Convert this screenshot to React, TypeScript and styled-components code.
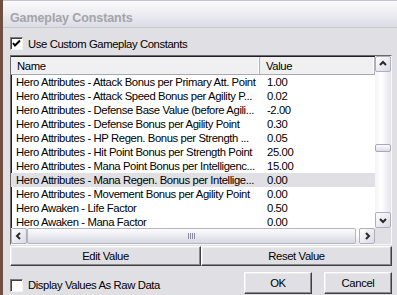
import React from 'react';
import styled, { createGlobalStyle } from 'styled-components';

interface Row {
	name: string;
	value: string;
	selected?: boolean;
}

const rows: Row[] = [
	{ name: 'Hero Attributes - Attack Bonus per Primary Att. Point', value: '1.00' },
	{ name: 'Hero Attributes - Attack Speed Bonus per Agility P...', value: '0.02' },
	{ name: 'Hero Attributes - Defense Base Value (before Agili...', value: '-2.00' },
	{ name: 'Hero Attributes - Defense Bonus per Agility Point', value: '0.30' },
	{ name: 'Hero Attributes - HP Regen. Bonus per Strength ...', value: '0.05' },
	{ name: 'Hero Attributes - Hit Point Bonus per Strength Point', value: '25.00' },
	{ name: 'Hero Attributes - Mana Point Bonus per Intelligenc...', value: '15.00' },
	{ name: 'Hero Attributes - Mana Regen. Bonus per Intellige...', value: '0.00', selected: true },
	{ name: 'Hero Attributes - Movement Bonus per Agility Point', value: '0.00' },
	{ name: 'Hero Awaken - Life Factor', value: '0.50' },
	{ name: 'Hero Awaken - Mana Factor', value: '0.00' },
];

const Chevron = ({ dir }: { dir: 'up' | 'down' | 'left' | 'right' }) => {
	const pts = {
		up: '2,6 5,3 8,6',
		down: '2,4 5,7 8,4',
		left: '6,2 3,5 6,8',
		right: '4,2 7,5 4,8',
	}[dir];
	return (
		<svg width='10' height='10' viewBox='0 0 10 10'>
			<polyline points={pts} fill='none' stroke='#2a2a2a' strokeWidth='2' />
		</svg>
	);
};

const App = () => {
	return (
		<>
			<GlobalStyle />
			<Window>
				<TitleBar>Gameplay Constants</TitleBar>
				<Body>
					<CheckRow>
						<CheckBox>
							<svg width='9' height='9' viewBox='0 0 9 9'>
								<polyline points='1,4 3,6.5 8,1.5' fill='none' stroke='#000' strokeWidth='2' />
							</svg>
						</CheckBox>
						<span>Use Custom Gameplay Constants</span>
					</CheckRow>

					<ListBox>
						<ListContent>
							<HeaderRow>
								<HeaderCell>Name</HeaderCell>
								<HeaderCell>Value</HeaderCell>
							</HeaderRow>
							{rows.map((r) => (
								<DataRow key={r.name} $selected={r.selected}>
									<NameCell>{r.name}</NameCell>
									<ValueCell>{r.value}</ValueCell>
								</DataRow>
							))}
						</ListContent>

						<VScroll>
							<ArrowBtn>
								<Chevron dir='up' />
							</ArrowBtn>
							<VTrack>
								<VThumb style={{ marginTop: 72 }} />
							</VTrack>
							<ArrowBtn>
								<Chevron dir='down' />
							</ArrowBtn>
						</VScroll>

						<HScroll>
							<ArrowBtn>
								<Chevron dir='left' />
							</ArrowBtn>
							<HTrack>
								<HThumb>
									<Grip />
								</HThumb>
							</HTrack>
							<ArrowBtn>
								<Chevron dir='right' />
							</ArrowBtn>
						</HScroll>
						<Corner />
					</ListBox>

					<ActionRow>
						<RaisedButton>Edit Value</RaisedButton>
						<RaisedButton>Reset Value</RaisedButton>
					</ActionRow>

					<FooterRow>
						<CheckRow>
							<CheckBox />
							<span>Display Values As Raw Data</span>
						</CheckRow>
						<DialogButtons>
							<RaisedButton>OK</RaisedButton>
							<RaisedButton>Cancel</RaisedButton>
						</DialogButtons>
					</FooterRow>
				</Body>
			</Window>
		</>
	);
};

const GlobalStyle = createGlobalStyle`
	html, body {
		margin: 0;
		padding: 0;
	}
	body {
		width: 397px;
		height: 295px;
		overflow: hidden;
		background: #e0dfe3;
		font-family: 'Liberation Sans', Arial, sans-serif;
		font-size: 11.3px;
		letter-spacing: -0.4px;
		color: #000;
	}
`;

const Window = styled.div`
	display: flex;
	flex-direction: column;
	width: 397px;
	height: 295px;
	box-sizing: border-box;
	border-left: 3px solid #6e4f40;
	background: #e0dfe3;
`;

const TitleBar = styled.div`
	display: flex;
	align-items: center;
	height: 28px;
	box-sizing: border-box;
	padding: 7px 0 0 7px;
	border-top: 1px solid #c4c4cc;
	border-bottom: 1px solid #c8c8d2;
	background: linear-gradient(#fbfbfd 0%, #f2f2f6 30%, #dcdce6 100%);
	font-size: 12.5px;
	font-weight: bold;
	letter-spacing: -0.1px;
	color: #a4a4a8;
`;

const Body = styled.div`
	display: flex;
	flex-direction: column;
	padding: 0 5px 0 7px;
`;

const CheckRow = styled.label`
	display: flex;
	align-items: center;
	gap: 5px;
	height: 13px;
	margin-top: 9px;
`;

const CheckBox = styled.span`
	display: flex;
	align-items: center;
	justify-content: center;
	width: 13px;
	height: 13px;
	box-sizing: border-box;
	border: 1px solid;
	border-color: #7a7a7a #f4f4f4 #f4f4f4 #7a7a7a;
	box-shadow: inset 1px 1px 0 #404040;
	background: #fff;
`;

const ListBox = styled.div`
	display: grid;
	grid-template-columns: 1fr 16px;
	grid-template-rows: 1fr 16px;
	height: 190px;
	margin-top: 5px;
	box-sizing: border-box;
	border: 1px solid;
	border-color: #6a6a6a #f8f8f8 #f8f8f8 #6a6a6a;
	box-shadow: inset 1px 1px 0 #202020;
	background: #fff;
`;

const ListContent = styled.div`
	overflow: hidden;
	padding-top: 1px;
`;

const HeaderRow = styled.div`
	display: grid;
	grid-template-columns: 249px 1fr;
	height: 17px;
	background: #f0f0f2;
	border-bottom: 1px solid #a8a8b0;
`;

const HeaderCell = styled.div`
	display: flex;
	align-items: center;
	padding-left: 6px;
	border-right: 1px solid #b0b0b8;
	box-shadow: inset -1px 0 0 #fff;
`;

const DataRow = styled.div<{ $selected?: boolean }>`
	display: grid;
	grid-template-columns: 249px 1fr;
	height: 14px;
	line-height: 14px;
	background: ${(p) => (p.$selected ? '#e0dfe3' : 'transparent')};
`;

const NameCell = styled.div`
	padding-left: 5px;
	white-space: nowrap;
	overflow: hidden;
`;

const ValueCell = styled.div`
	padding-left: 7px;
	white-space: nowrap;
`;

const ArrowBtn = styled.div`
	display: flex;
	align-items: center;
	justify-content: center;
	flex: none;
	width: 16px;
	height: 16px;
	box-sizing: border-box;
	border: 1px solid #aeaebe;
	border-radius: 2px;
	background: linear-gradient(135deg, #fefefe, #dadae4);
`;

const VScroll = styled.div`
	display: flex;
	flex-direction: column;
	background: linear-gradient(90deg, #f4f4f8, #ffffff 40%, #e4e4ec);
`;

const VTrack = styled.div`
	flex: 1;
	display: flex;
	flex-direction: column;
`;

const VThumb = styled.div`
	width: 16px;
	height: 8px;
	box-sizing: border-box;
	border: 1px solid #a8a8b8;
	border-radius: 2px;
	background: linear-gradient(#fcfcfe, #dcdce6);
`;

const HScroll = styled.div`
	display: flex;
	align-items: center;
	background: linear-gradient(#f4f4f8, #ffffff 40%, #e4e4ec);
`;

const HTrack = styled.div`
	flex: 1;
	display: flex;
	padding-right: 3px;
`;

const HThumb = styled.div`
	display: flex;
	align-items: center;
	justify-content: center;
	flex: 1;
	height: 16px;
	box-sizing: border-box;
	border: 1px solid #b4b4c4;
	border-radius: 2px;
	background: linear-gradient(#fdfdfe, #e6e6ee 60%, #d8d8e2);
`;

const Grip = styled.div`
	width: 7px;
	height: 6px;
	background: repeating-linear-gradient(90deg, #8c8c9c 0 1px, transparent 1px 2px);
`;

const Corner = styled.div`
	background: #e0dfe3;
`;

const RaisedButton = styled.button`
	height: 100%;
	padding: 0;
	box-sizing: border-box;
	border: 1px solid;
	border-color: #ffffff #404040 #404040 #ffffff;
	box-shadow: inset -1px -1px 0 #8a8a8e, inset 1px 1px 0 #ececee;
	background: #e0dfe3;
	font-family: inherit;
	font-size: 11.3px;
	letter-spacing: -0.4px;
	color: #000;
`;

const ActionRow = styled.div`
	display: grid;
	grid-template-columns: 1fr 1fr;
	height: 20px;
	margin-top: 1px;
`;

const FooterRow = styled.div`
	display: flex;
	align-items: center;
	justify-content: space-between;
	height: 22px;
	margin-top: 6px;

	& > label {
		margin-top: 4px;
	}
`;

const DialogButtons = styled.div`
	display: grid;
	grid-template-columns: 68px 68px;
	gap: 12px;
	height: 22px;
`;

export default App;
